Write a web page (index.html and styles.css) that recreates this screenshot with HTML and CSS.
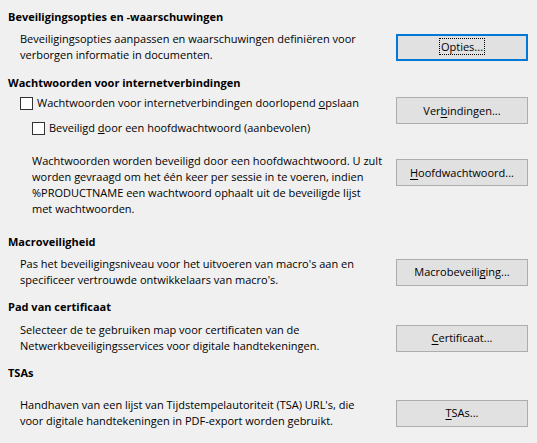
FILE: index.html
```html
<!DOCTYPE html>
<html lang="nl">
<head>
<meta charset="utf-8">
<title>Beveiliging</title>
<link rel="stylesheet" href="styles.css">
</head>
<body>
<div class="page">
  <section class="sec sec-1">
    <h2 class="head">Beveiligingsopties en -waarschuwingen</h2>
    <div class="row">
      <p class="text">Beveiligingsopties aanpassen en waarschuwingen definiëren voor<br>verborgen informatie in documenten.</p>
      <button class="btn focus"><span class="focus-ring">Opties...</span></button>
    </div>
  </section>

  <section class="sec sec-2">
    <h2 class="head">Wachtwoorden voor internetverbindingen</h2>
    <div class="row row-top">
      <div class="checks">
        <label class="check"><span class="box"></span><span class="label-text">Wachtwoorden voor internetverbindingen doorlopend <u>o</u>pslaan</span></label>
        <label class="check check-sub"><span class="box"></span><span class="label-text">Beveiligd <u>d</u>oor een hoofdwachtwoord (aanbevolen)</span></label>
      </div>
      <button class="btn btn-verb">Ver<u>b</u>indingen...</button>
    </div>
    <div class="row row-top row-pw">
      <p class="text text-sub">Wachtwoorden worden beveiligd door een hoofdwachtwoord. U zult<br>worden gevraagd om het één keer per sessie in te voeren, indien<br>%PRODUCTNAME een wachtwoord ophaalt uit de beveiligde lijst<br>met wachtwoorden.</p>
      <button class="btn btn-master"><u>H</u>oofdwachtwoord...</button>
    </div>
  </section>

  <section class="sec sec-3">
    <h2 class="head">Macroveiligheid</h2>
    <div class="row">
      <p class="text">Pas het beveiligingsniveau voor het uitvoeren van macro's aan en<br>specificeer vertrouwde ontwikkelaars van macro's.</p>
      <button class="btn">Macrobeveili<u>g</u>ing...</button>
    </div>
  </section>

  <section class="sec sec-4">
    <h2 class="head">Pad van certificaat</h2>
    <div class="row">
      <p class="text">Selecteer de te gebruiken map voor certificaten van de<br>Netwerkbeveiligingsservices voor digitale handtekeningen.</p>
      <button class="btn"><u>C</u>ertificaat...</button>
    </div>
  </section>

  <section class="sec sec-5">
    <h2 class="head">TSAs</h2>
    <div class="row">
      <p class="text">Handhaven van een lijst van Tijdstempelautoriteit (TSA) URL's, die<br>voor digitale handtekeningen in PDF-export worden gebruikt.</p>
      <button class="btn"><u>T</u>SAs...</button>
    </div>
  </section>
</div>
</body>
</html>
```

FILE: styles.css
```css
html, body {
  margin: 0;
  padding: 0;
  background: #f0f0f0;
}

body {
  font-family: "Open Sans", "Noto Sans", "Liberation Sans", sans-serif;
  font-size: 11px;
  line-height: 16px;
  color: #000;
}

.page {
  display: flex;
  flex-direction: column;
  padding: 9px 9px 0 8px;
}

.head {
  margin: 0;
  font-size: 11px;
  font-weight: 700;
  line-height: 16px;
}

.row {
  display: flex;
  align-items: center;
  justify-content: space-between;
}

.row-top {
  align-items: flex-start;
}

.text {
  margin: 0 0 0 12px;
}

.text-sub {
  margin-left: 24px;
}

.sec-1 .row { margin-top: 6px; }
.sec-2 { margin-top: 12px; }
.sec-2 .row-top:first-of-type { margin-top: 4px; }
.sec-3 { margin-top: 17px; }
.sec-3 .row { margin-top: 6px; }
.sec-4 { margin-top: 11px; }
.sec-4 .row { margin-top: 7px; }
.sec-5 { margin-top: 11px; }
.sec-5 .row { margin-top: 16px; }

.checks {
  display: flex;
  flex-direction: column;
  gap: 9px;
}

.check {
  display: flex;
  align-items: center;
  margin-left: 12px;
}

.check-sub {
  margin-left: 24px;
}

.box {
  box-sizing: border-box;
  flex: none;
  width: 13px;
  height: 13px;
  margin-right: 4px;
  background: #fff;
  border: 1px solid #333;
}

.row-pw {
  margin-top: 17px;
}

.btn {
  box-sizing: border-box;
  flex: none;
  width: 132px;
  height: 27px;
  padding: 0;
  font-family: inherit;
  font-size: 11px;
  line-height: 16px;
  color: #000;
  background: #e1e1e1;
  border: 1px solid #adadad;
  border-radius: 0;
}

u {
  text-decoration-thickness: 1px;
  text-decoration-skip-ink: none;
}

.btn u {
  text-underline-offset: 2px;
}

.btn.focus {
  border: 2px solid #0078d7;
}

.focus-ring {
  outline: 1px dotted #000;
  outline-offset: 0;
  padding: 0 1px;
}

.btn-verb { margin-top: 2px; }
.btn-master { margin-top: 6px; }
```
